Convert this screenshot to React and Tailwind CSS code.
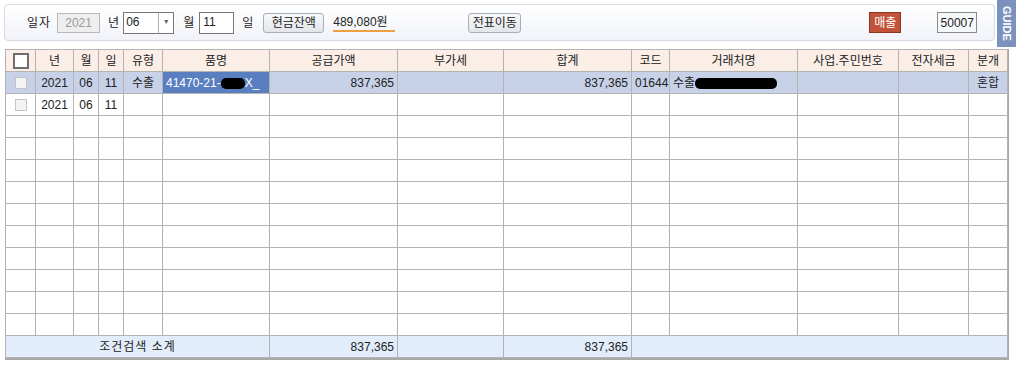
import React from "react";

const cols = [30, 38, 25, 25, 39, 107, 128, 106, 128, 38, 128, 101, 70, 39];
const heads = ["", "년", "월", "일", "유형", "품명", "공급가액", "부가세", "합계", "코드", "거래처명", "사업.주민번호", "전자세금", "분개"];

const font = { fontFamily: '"Liberation Sans", "Noto Sans CJK KR", sans-serif' };

const RowCheck = () => (
  <div className="mx-auto w-[12px] h-[12px] border border-[#c4c4c4] bg-[#f3f3f3]" />
);

const Blob = ({ w }) => (
  <span className={`inline-block align-middle h-[11px] bg-black rounded-[5px] ${w}`} />
);

const Btn = ({ children, className }) => (
  <div
    className={`h-[20px] flex items-center justify-center whitespace-nowrap border border-[#a9afb8] rounded-[3px] bg-gradient-to-b from-[#f7f8fa] to-[#e2e5ea] text-[12px] text-[#222] ${className}`}
  >
    {children}
  </div>
);

const TopBar = () => (
  <div className="h-[37px] w-[991px] rounded-[4px] border border-[#d6dae5] bg-gradient-to-b from-[#ffffff] to-[#f1f3f9] flex items-center text-[12px] text-[#222] pl-[22px] whitespace-nowrap">
    <span className="tracking-[1px]">일자</span>
    <div className="ml-[6px] w-[43px] h-[20px] border border-[#b9b9b9] bg-[#eeeeee] text-[#9a9a9a] flex items-center justify-center">
      2021
    </div>
    <span className="ml-[8px]">년</span>
    <div className="ml-[4px] w-[51px] h-[22px] border border-[#777] bg-white flex">
      <span className="flex-1 pl-[2px] leading-[18px]">06</span>
      <div className="w-[15px] border-l border-[#b0b0b0] flex items-center justify-center text-[7px] text-[#666]">▼</div>
    </div>
    <span className="ml-[9px]">월</span>
    <div className="ml-[5px] w-[35px] h-[22px] border border-[#777] bg-white pl-[3px] leading-[18px]">11</div>
    <span className="ml-[8px]">일</span>
    <Btn className="ml-[10px] w-[61px]">현금잔액</Btn>
    <span className="ml-[9px] border-b-2 border-[#f0a040] leading-[16px] w-[62px]">489,080원</span>
    <Btn className="ml-[73px] w-[53px]">전표이동</Btn>
    <div className="ml-[348px] w-[32px] h-[21px] bg-[#c1533a] border border-[#8e3422] text-white flex items-center justify-center">
      매출
    </div>
    <div className="ml-[36px] w-[40px] h-[21px] bg-[#f6f9fb] border border-[#8a8a8a] flex items-center justify-center">
      50007
    </div>
  </div>
);

const App = () => {
  const empty = Array.from({ length: 10 });
  const td = "border border-[#b3b3b3] h-[22px] px-[3px] whitespace-nowrap overflow-hidden";
  return (
    <div className="relative w-[1016px] h-[365px] bg-white" style={font}>
      <div className="pt-[4px] pl-[4px]">
        <TopBar />
      </div>
      <div className="absolute right-0 top-0 w-[19px] h-[47px] bg-[#7b92bf] flex items-center justify-center">
        <span className="text-white font-bold text-[11px]" style={{ writingMode: "vertical-rl" }}>
          GUIDE
        </span>
      </div>
      <div className="mt-[8px] ml-[5px] w-[1004px] border-r border-b-2 border-[#a8a8a8] pr-[1px]">
        <table className="table-fixed border-collapse w-[1002px] text-[12px] text-[#222]">
          <colgroup>
            {cols.map((w, i) => (
              <col key={i} style={{ width: w }} />
            ))}
          </colgroup>
          <thead>
            <tr className="bg-[#fbeee7]">
              {heads.map((h, i) => (
                <th key={i} className={`${td} font-normal text-center`}>
                  {i === 0 ? (
                    <div className="mx-auto w-[16px] h-[16px] border-2 border-[#6e6e6e] bg-white" />
                  ) : (
                    h
                  )}
                </th>
              ))}
            </tr>
          </thead>
          <tbody>
            <tr className="bg-[#c7d2e9]">
              <td className={td}><RowCheck /></td>
              <td className={`${td} text-center`}>2021</td>
              <td className={`${td} text-center`}>06</td>
              <td className={`${td} text-center`}>11</td>
              <td className={`${td} text-center`}>수출</td>
              <td className={`${td} bg-[#5a7fc1] text-white`}>
                41470-21-<Blob w="w-[24px]" />X_
              </td>
              <td className={`${td} text-right`}>837,365</td>
              <td className={td}></td>
              <td className={`${td} text-right`}>837,365</td>
              <td className={`${td} text-center px-0`}>01644</td>
              <td className={td}>
                수출<Blob w="w-[82px]" />
              </td>
              <td className={td}></td>
              <td className={td}></td>
              <td className={`${td} text-center`}>혼합</td>
            </tr>
            <tr>
              <td className={td}><RowCheck /></td>
              <td className={`${td} text-center`}>2021</td>
              <td className={`${td} text-center`}>06</td>
              <td className={`${td} text-center`}>11</td>
              {cols.slice(4).map((_, i) => (
                <td key={i} className={td}></td>
              ))}
            </tr>
            {empty.map((_, r) => (
              <tr key={r}>
                {cols.map((_, i) => (
                  <td key={i} className={td}></td>
                ))}
              </tr>
            ))}
            <tr className="bg-[#e2edfb]">
              <td colSpan={6} className={`${td} text-center h-[21px] tracking-[1px]`}>조건검색 소계</td>
              <td className={`${td} text-right h-[21px]`}>837,365</td>
              <td className={`${td} h-[21px]`}></td>
              <td className={`${td} text-right h-[21px]`}>837,365</td>
              <td colSpan={5} className={`${td} h-[21px]`}></td>
            </tr>
          </tbody>
        </table>
      </div>
    </div>
  );
};

export default App;
